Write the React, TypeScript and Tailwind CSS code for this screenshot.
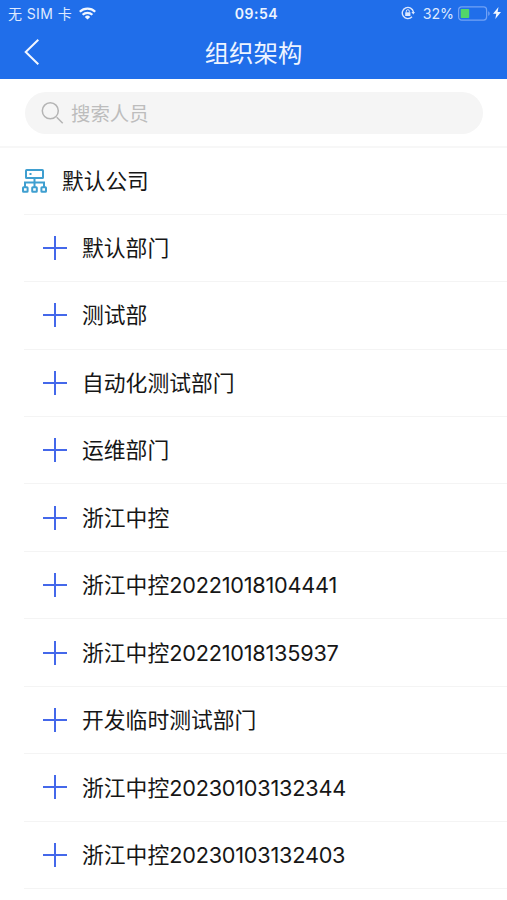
const departments = [
  { zh: '默认部门', num: '' },
  { zh: '测试部', num: '' },
  { zh: '自动化测试部门', num: '' },
  { zh: '运维部门', num: '' },
  { zh: '浙江中控', num: '' },
  { zh: '浙江中控', num: '20221018104441' },
  { zh: '浙江中控', num: '20221018135937' },
  { zh: '开发临时测试部门', num: '' },
  { zh: '浙江中控', num: '20230103132344' },
  { zh: '浙江中控', num: '20230103132403' },
];

function StatusBar() {
  return (
    <div className="grid h-[27px] grid-cols-[1fr_auto_1fr] items-center text-[14px] leading-none text-[#dfeaff]">
      <div className="flex items-center pl-[8px]">
        <span className="whitespace-pre text-[14px] tracking-[0.4px]">无 SIM 卡</span>
        <svg className="ml-[7px] h-[13px] w-[17px]" viewBox="0 0 17 13" fill="none" stroke="#f2f7ff" strokeWidth="2.2">
          <path d="M0.8 4.8a11 11 0 0 1 15.4 0" />
          <path d="M3.6 7.8a7 7 0 0 1 9.8 0" />
          <path d="M8.5 12.6 5.8 9.9a3.8 3.8 0 0 1 5.4 0z" fill="#f2f7ff" stroke="none" />
        </svg>
      </div>
      <span className="ml-[6px] text-[14px] font-semibold tracking-[0.5px] text-[#edf4ff]">09:54</span>
      <div className="flex items-center justify-end pr-[6px]">
        <svg className="h-[14px] w-[14px]" viewBox="0 0 14 14" fill="none" stroke="#dce8ff" strokeWidth="1.4">
          <path d="M11 10.8A5.6 5.6 0 1 1 12.4 6" />
          <path d="M10.4 6h3.6l-1.7 2.6z" fill="#dce8ff" stroke="none" />
          <rect x="4.2" y="6.3" width="5.2" height="3.7" fill="#dce8ff" stroke="none" />
          <path d="M5.3 6.5V5.2a1.5 1.5 0 0 1 3 0v1.3" strokeWidth="1" />
        </svg>
        <span className="ml-[8px] pt-[2px] text-[14.2px]">32%</span>
        <svg className="ml-[4px] h-[15px] w-[33px]" viewBox="0 0 33 15" fill="none">
          <rect x="0.6" y="0.9" width="28" height="13.2" rx="3" stroke="#72a2f5" strokeWidth="1.2" />
          <rect x="2.7" y="3" width="8.5" height="9" rx="0.8" fill="#52d769" />
          <path d="M30.2 5.2c2 .8 2 3.8 0 4.6z" fill="#72a2f5" />
        </svg>
        <svg className="ml-[2px] h-[12px] w-[8px]" viewBox="0 0 8 12" fill="#f2f7ff">
          <path d="M5.5 0 0 6.8h3.3L2.3 12 8 4.9H4.6z" />
        </svg>
      </div>
    </div>
  );
}

function CompanyIcon() {
  return (
    <svg className="h-[24px] w-[25px]" viewBox="0 0 25 24" fill="none" stroke="#3f9fd0" strokeWidth="2">
      <rect x="4" y="1.1" width="17" height="8" rx="0.6" />
      <path d="M7.5 5.1h2M12.5 9v9M3 18v-4.4h19V18" />
      <rect x="1" y="18.2" width="4.6" height="4.6" rx="0.6" />
      <rect x="10.2" y="18.2" width="4.6" height="4.6" rx="0.6" />
      <rect x="19.4" y="18.2" width="4.6" height="4.6" rx="0.6" />
    </svg>
  );
}

export default function App() {
  return (
    <main className="flex h-[900px] w-[507px] flex-col overflow-hidden bg-white font-['Inter','Noto_Sans_CJK_SC',sans-serif] text-[#161616]">
      <header className="h-[79px] shrink-0 bg-[#206eea]">
        <StatusBar />
        <div className="grid h-[50px] grid-cols-[60px_1fr_60px] items-center">
          <svg className="ml-[24px] h-[26px] w-[16px]" viewBox="0 0 16 26" fill="none" stroke="#f3f7ff" strokeWidth="2">
            <path d="M14.3 0.8 1.7 13l12.6 12.2" />
          </svg>
          <h1 className="pt-[2px] text-center text-[24.4px] leading-none text-[#eef4ff]">组织架构</h1>
        </div>
      </header>
      <div className="h-[69px] shrink-0 border-b-2 border-[#f7f7f7] pl-[25px] pr-[24px] pt-[13px]">
        <div className="flex h-[42px] items-center rounded-full bg-[#f5f5f5] pl-[16px] text-[19.4px] leading-none text-[#bdbdbd]">
          <svg className="mr-[7px] h-[23px] w-[23px]" viewBox="0 0 23 23" fill="none" stroke="#b4b4b4" strokeWidth="1.5">
            <circle cx="9.3" cy="8.8" r="8" />
            <path d="m15.7 15.3 6 6" />
          </svg>
          <span className="pt-[3px]">搜索人员</span>
        </div>
      </div>
      <div className="flex h-[65.7px] shrink-0 items-center pl-[22px] text-[21.7px] leading-none">
        <CompanyIcon />
        <span className="ml-[15px] pt-[2px]">默认公司</span>
      </div>
      <ul className="ml-[24px]">
        {departments.map((d, i) => (
          <li key={i} className="flex h-[67.45px] items-center border-t border-[#f4f4f4] pl-[19px] text-[21.8px] leading-none">
            <svg className="h-[24px] w-[24px]" viewBox="0 0 24 24" stroke="#4468ea" strokeWidth="2">
              <path d="M12 0v24M0 12h24" />
            </svg>
            <span className="ml-[15px] flex items-baseline pt-[2px]">
              {d.zh}
              {d.num && <span className="text-[21.7px] tracking-[-0.23px]">{d.num}</span>}
            </span>
          </li>
        ))}
        <li className="border-t border-[#f4f4f4]" />
      </ul>
    </main>
  );
}
